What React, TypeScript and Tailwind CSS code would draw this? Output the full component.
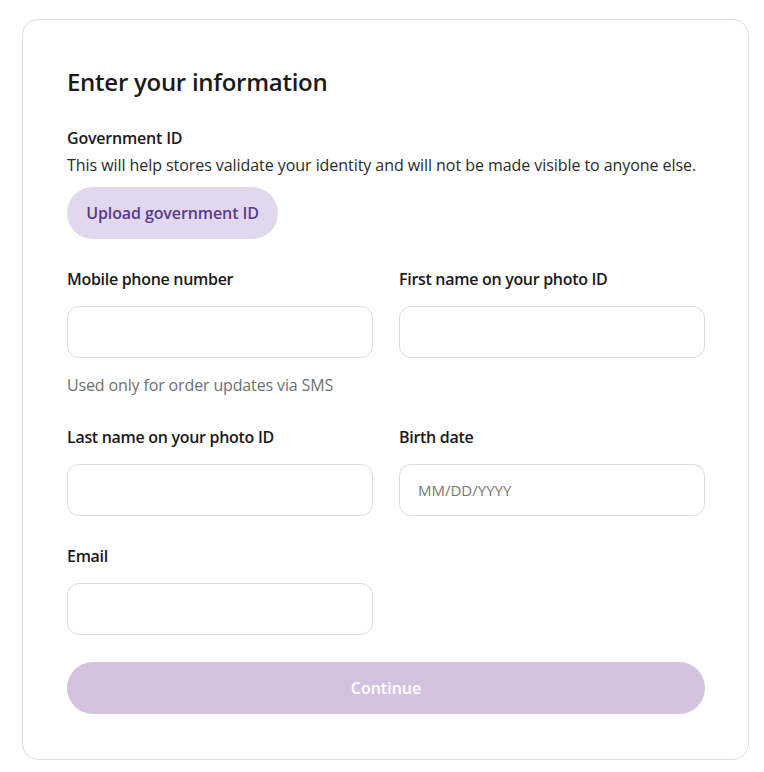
import React from "react";

const font = { fontFamily: '"Open Sans", "Noto Sans", sans-serif' };

function Field({ label, placeholder, hint }: { label: string; placeholder?: string; hint?: string }) {
  return (
    <div className="flex flex-col">
      <label className="text-[16px] leading-[24px] font-semibold tracking-[-0.3px] text-[#1a1a1a]">{label}</label>
      <input
        placeholder={placeholder}
        className="mt-[15px] h-[52px] w-full rounded-[12px] border border-[#dcdcdc] bg-white px-[18px] text-[15px] text-[#1a1a1a] placeholder:text-[#7a7a7a] outline-none"
      />
      {hint && <p className="mt-[15px] text-[16px] leading-[24px] tracking-[-0.14px] text-[#6f6f6f]">{hint}</p>}
    </div>
  );
}

export default function App() {
  return (
    <div className="min-h-screen bg-white pt-[19px] pl-[22px]" style={font}>
      <div className="w-[727px] rounded-[16px] border border-[#dedede] pl-[44px] pr-[43px] pt-[46px] pb-[45px]">
        <h1 className="text-[24px] leading-[32px] font-semibold tracking-[-0.27px] text-[#1a1a1a]">Enter your information</h1>
        <h2 className="mt-[28px] text-[16px] leading-[24px] font-semibold tracking-[-0.2px] text-[#1a1a1a]">Government ID</h2>
        <p className="mt-[3px] text-[16px] leading-[24px] tracking-[-0.06px] text-[#2b2b2b]">
          This will help stores validate your identity and will not be made visible to anyone else.
        </p>
        <button className="mt-[10px] h-[52px] w-[211px] rounded-full bg-[#e2d8ed] text-[16px] font-semibold tracking-[-0.1px] text-[#5a3a8c]">
          Upload government ID
        </button>
        <div className="mt-[28px] grid grid-cols-2 gap-x-[26px] gap-y-[28px]">
          <Field label="Mobile phone number" hint="Used only for order updates via SMS" />
          <Field label="First name on your photo ID" />
          <Field label="Last name on your photo ID" />
          <Field label="Birth date" placeholder="MM/DD/YYYY" />
          <Field label="Email" />
        </div>
        <button className="mt-[27px] h-[52px] w-full rounded-full bg-[#d3c3e0] text-[16px] font-semibold text-white">
          Continue
        </button>
      </div>
    </div>
  );
}
